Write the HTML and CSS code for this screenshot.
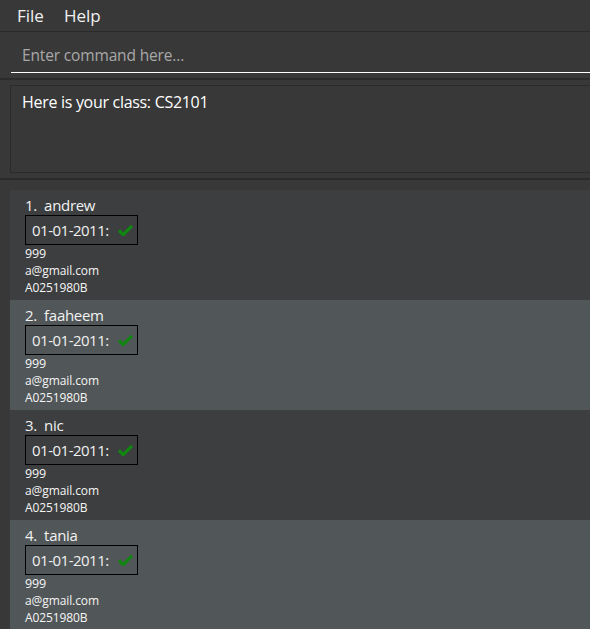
FILE: index.html
```html
<!DOCTYPE html>
<html>
<head>
<meta charset="utf-8">
<link rel="stylesheet" href="styles.css">
</head>
<body>
<div class="app">
  <div class="menubar">
    <span class="menu-item">File</span>
    <span class="menu-item">Help</span>
  </div>
  <div class="command-pane">
    <div class="command-box">Enter command here...</div>
  </div>
  <div class="result-pane">
    <div class="result-box">Here is your class: CS2101</div>
  </div>
  <div class="list">
    <div class="card odd">
      <div class="name">1.&nbsp; andrew</div>
      <div class="date"><span>01-01-2011:</span><svg class="check" viewBox="0 0 16 12" width="15" height="12"><path d="M1 6.5 L5.5 11 L15 1.5" fill="none" stroke="#118611" stroke-width="3.4"/></svg></div>
      <div class="phone">999</div>
      <div class="detail">a@gmail.com</div>
      <div class="detail">A0251980B</div>
    </div>
    <div class="card even">
      <div class="name">2.&nbsp; faaheem</div>
      <div class="date"><span>01-01-2011:</span><svg class="check" viewBox="0 0 16 12" width="15" height="12"><path d="M1 6.5 L5.5 11 L15 1.5" fill="none" stroke="#118611" stroke-width="3.4"/></svg></div>
      <div class="phone">999</div>
      <div class="detail">a@gmail.com</div>
      <div class="detail">A0251980B</div>
    </div>
    <div class="card odd">
      <div class="name">3.&nbsp; nic</div>
      <div class="date"><span>01-01-2011:</span><svg class="check" viewBox="0 0 16 12" width="15" height="12"><path d="M1 6.5 L5.5 11 L15 1.5" fill="none" stroke="#118611" stroke-width="3.4"/></svg></div>
      <div class="phone">999</div>
      <div class="detail">a@gmail.com</div>
      <div class="detail">A0251980B</div>
    </div>
    <div class="card even">
      <div class="name">4.&nbsp; tania</div>
      <div class="date"><span>01-01-2011:</span><svg class="check" viewBox="0 0 16 12" width="15" height="12"><path d="M1 6.5 L5.5 11 L15 1.5" fill="none" stroke="#118611" stroke-width="3.4"/></svg></div>
      <div class="phone">999</div>
      <div class="detail">a@gmail.com</div>
      <div class="detail">A0251980B</div>
    </div>
  </div>
</div>
</body>
</html>
```

FILE: styles.css
```css
html, body {
  margin: 0;
  padding: 0;
  background: #383838;
  overflow: hidden;
}
.app {
  width: 590px;
  height: 629px;
  font-family: "Open Sans", "Noto Sans", sans-serif;
  color: #ffffff;
  overflow: hidden;
}
.menubar {
  height: 31px;
  border-bottom: 1px solid #2b2b2b;
  display: flex;
  align-items: center;
  gap: 20px;
  padding-left: 17px;
}
.menu-item {
  font-size: 17px;
  color: #f0f0f0;
}
.command-pane {
  height: 46px;
  padding-left: 11px;
  border-bottom: 2px solid #2b2b2b;
}
.command-box {
  height: 41px;
  box-sizing: border-box;
  border-bottom: 1px solid #ffffff;
  padding-left: 11px;
  padding-top: 13px;
  font-size: 15.5px;
  color: #a8a8a8;
  line-height: 20px;
  letter-spacing: -0.15px;
}
.result-pane {
  padding: 5px 0 5px 10px;
  border-bottom: 2px solid #2b2b2b;
}
.result-box {
  height: 88px;
  box-sizing: border-box;
  border: 1px solid #2b2b2b;
  border-right: none;
  padding: 4px 11px;
  font-size: 16px;
  line-height: 24px;
  letter-spacing: -0.3px;
}
.list {
  padding: 10px 0 0 10px;
}
.card {
  height: 110px;
  box-sizing: border-box;
  padding: 5px 0 0 15px;
}
.odd { background: #3c3e3f; }
.even { background: #515658; }
.name {
  font-size: 15px;
  line-height: 20px;
  color: #f2f2f2;
  letter-spacing: -0.3px;
}
.date {
  display: inline-flex;
  align-items: center;
  width: 113px;
  height: 30px;
  box-sizing: border-box;
  border: 1px solid #000000;
  padding-left: 6px;
  font-size: 15px;
  color: #f0f0f0;
  letter-spacing: -0.5px;
}
.check {
  margin-left: 9px;
}
.phone, .detail {
  font-size: 12px;
  line-height: 17px;
  color: #f5f5f5;
  letter-spacing: -0.1px;
}
.phone {
  font-size: 12.5px;
}
```
